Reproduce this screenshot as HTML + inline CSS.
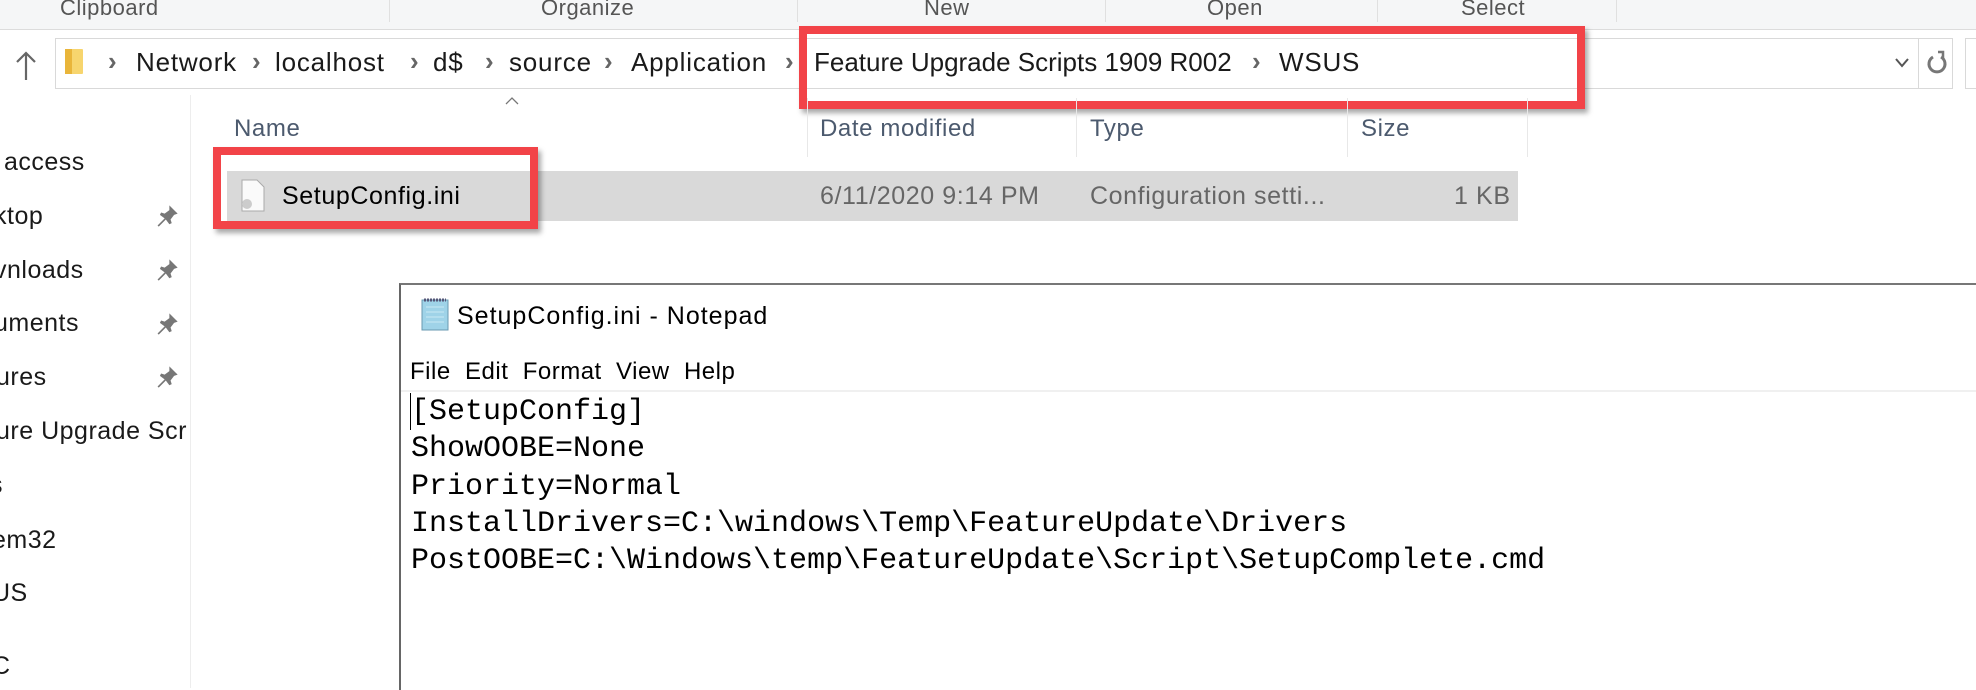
<!DOCTYPE html>
<html><head><meta charset="utf-8"><style>
body{margin:0;width:1976px;height:688px;overflow:hidden;background:#fff;position:relative;font-family:"Liberation Sans",sans-serif;}
.a{position:absolute;white-space:nowrap;}
.rb{color:#555;font-size:22px;top:-5px;letter-spacing:0.5px}
.sep{position:absolute;width:1px;background:#e0e0e0;}
.bc{font-size:26px;color:#1a1a1a;top:47px;letter-spacing:0.8px}
.ch{font-size:26px;color:#666;top:46px;font-weight:bold}
.nav{font-size:25px;color:#1a1a1a;left:-4px;letter-spacing:0.5px}
.pin{position:absolute;left:154px;width:26px;height:26px;}
.hd{font-size:24px;color:#4c5a6e;top:115px;letter-spacing:0.6px}
.cs{position:absolute;top:98px;height:59px;width:1px;background:#e8e8e8;}
.red{position:absolute;border:8px solid #f24348;box-shadow:3px 4px 5px rgba(0,0,0,.35);}
.code{font-family:"Liberation Mono",monospace;font-size:30px;color:#000;left:411px;}
.rt{font-size:25px;top:182px;letter-spacing:0.6px}
</style></head><body>
<div class="a" style="left:0;top:0;width:1976px;height:29px;background:#f5f6f7;border-bottom:1px solid #dcdcdc"></div>
<div class="a rb" style="left:60px">Clipboard</div>
<div class="a rb" style="left:541px">Organize</div>
<div class="a rb" style="left:924px">New</div>
<div class="a rb" style="left:1207px">Open</div>
<div class="a rb" style="left:1461px">Select</div>
<div class="sep" style="left:389px;top:0;height:22px"></div>
<div class="sep" style="left:797px;top:0;height:22px"></div>
<div class="sep" style="left:1105px;top:0;height:22px"></div>
<div class="sep" style="left:1377px;top:0;height:22px"></div>
<div class="sep" style="left:1616px;top:0;height:22px"></div>
<svg class="a" style="left:14px;top:50px" width="24" height="32"><path d="M12 30V3M3 12l9-9 9 9" stroke="#666" stroke-width="2.2" fill="none"/></svg>
<div class="a" style="left:55px;top:38px;width:1896px;height:49px;border:1px solid #d9d9d9;background:#fff"></div>
<div class="a" style="left:1965px;top:38px;width:20px;height:49px;border:1px solid #d9d9d9"></div>
<div class="a" style="left:65px;top:49px;width:18px;height:25px;background:#f7d56e;border-radius:1px"></div>
<div class="a" style="left:65px;top:49px;width:7px;height:25px;background:#e9b53a"></div>
<div class="a ch" style="left:108px">›</div>
<div class="a bc" style="left:136px">Network</div>
<div class="a ch" style="left:252px">›</div>
<div class="a bc" style="left:275px">localhost</div>
<div class="a ch" style="left:410px">›</div>
<div class="a bc" style="left:433px">d$</div>
<div class="a ch" style="left:485px">›</div>
<div class="a bc" style="left:509px">source</div>
<div class="a ch" style="left:604px">›</div>
<div class="a bc" style="left:631px">Application</div>
<div class="a ch" style="left:785px">›</div>
<div class="a bc" style="left:814px;letter-spacing:0">Feature Upgrade Scripts 1909 R002</div>
<div class="a ch" style="left:1252px">›</div>
<div class="a bc" style="left:1279px">WSUS</div>
<svg class="a" style="left:1894px;top:57px" width="16" height="12"><path d="M2 2l6 7 6-7" stroke="#555" stroke-width="2" fill="none"/></svg>
<div class="a" style="left:1918px;top:38px;width:1px;height:50px;background:#d9d9d9"></div>
<svg class="a" style="left:1926px;top:50px" width="22" height="26"><path d="M15 7A8 8 0 1 1 7 7" stroke="#777" stroke-width="3" fill="none"/><path d="M12 2h5v6" stroke="#777" stroke-width="2.5" fill="none"/></svg>
<div class="red" style="left:799px;top:26px;width:770px;height:67px"></div>
<div class="a" style="left:190px;top:95px;width:1px;height:593px;background:#ededed"></div>
<div class="a" style="left:0;top:140px;width:188px;height:548px;overflow:hidden">
<div class="a nav" style="top:8px;left:4px">access</div>
<div class="a nav" style="top:62px;left:-6px">ktop</div>
<div class="a nav" style="top:116px;left:-6px">vnloads</div>
<div class="a nav" style="top:169px;left:-6px">uments</div>
<div class="a nav" style="top:223px;left:-4px">ures</div>
<div class="a nav" style="top:277px;left:-4px">ure Upgrade Scr</div>
<div class="a nav" style="top:331px;left:-10px">s</div>
<div class="a nav" style="top:386px;left:-8px">em32</div>
<div class="a nav" style="top:439px;left:-8px">US</div>
<div class="a nav" style="top:512px;left:-8px">C</div>
</div>
<svg class="pin" style="top:203px" viewBox="0 0 22 22"><path d="M13 2l7 7-3 1-3 4 1 3-2 1-3-4-6 6-1-1 6-6-4-3 1-2 3 1 4-3z" fill="#777"/></svg>
<svg class="pin" style="top:257px" viewBox="0 0 22 22"><path d="M13 2l7 7-3 1-3 4 1 3-2 1-3-4-6 6-1-1 6-6-4-3 1-2 3 1 4-3z" fill="#777"/></svg>
<svg class="pin" style="top:311px" viewBox="0 0 22 22"><path d="M13 2l7 7-3 1-3 4 1 3-2 1-3-4-6 6-1-1 6-6-4-3 1-2 3 1 4-3z" fill="#777"/></svg>
<svg class="pin" style="top:364px" viewBox="0 0 22 22"><path d="M13 2l7 7-3 1-3 4 1 3-2 1-3-4-6 6-1-1 6-6-4-3 1-2 3 1 4-3z" fill="#777"/></svg>
<svg class="a" style="left:505px;top:96px" width="14" height="10"><path d="M1 8l6-6 6 6" stroke="#777" stroke-width="1.3" fill="none"/></svg>
<div class="a hd" style="left:234px">Name</div>
<div class="a hd" style="left:820px">Date modified</div>
<div class="a hd" style="left:1090px">Type</div>
<div class="a hd" style="left:1361px">Size</div>
<div class="cs" style="left:807px"></div><div class="cs" style="left:1076px"></div><div class="cs" style="left:1347px"></div><div class="cs" style="left:1527px"></div>
<div class="a" style="left:227px;top:171px;width:1291px;height:50px;background:#d9d9d9"></div>
<svg class="a" style="left:238px;top:178px" width="30" height="36"><path d="M4 2h15l7 7v24H4z" fill="#fafafa" stroke="#aaa"/><circle cx="9" cy="26" r="5" fill="#ccc"/></svg>
<div class="a rt" style="left:282px;color:#000">SetupConfig.ini</div>
<div class="a rt" style="left:820px;color:#666">6/11/2020 9:14 PM</div>
<div class="a rt" style="left:1090px;color:#666">Configuration setti...</div>
<div class="a rt" style="left:1454px;color:#666">1 KB</div>
<div class="red" style="left:213px;top:147px;width:309px;height:66px"></div>
<div class="a" style="left:399px;top:283px;width:1577px;height:405px;border-left:2px solid #666;border-top:2px solid #777;background:#fff"></div>
<svg class="a" style="left:418px;top:297px" width="34" height="34"><rect x="4" y="3" width="26" height="30" fill="#9fd3e8" stroke="#6a98b0"/><path d="M8 10h18M8 15h18M8 20h18M8 25h18" stroke="#c8e8f4"/><path d="M6 3h22" stroke="#557" stroke-width="3" stroke-dasharray="2 1"/></svg>
<div class="a" style="left:457px;top:302px;font-size:25px;color:#000;letter-spacing:1px">SetupConfig.ini - Notepad</div>
<div class="a" style="left:410px;top:358px;font-size:24px;color:#000;letter-spacing:0.5px">File&nbsp; Edit&nbsp; Format&nbsp; View&nbsp; Help</div>
<div class="a" style="left:401px;top:390px;width:1575px;height:2px;background:#f0f0f0"></div>
<div class="a" style="left:410px;top:393px;width:1px;height:37px;background:#000"></div>
<div class="a code" style="top:395px">[SetupConfig]</div>
<div class="a code" style="top:432px">ShowOOBE=None</div>
<div class="a code" style="top:470px">Priority=Normal</div>
<div class="a code" style="top:507px">InstallDrivers=C:\windows\Temp\FeatureUpdate\Drivers</div>
<div class="a code" style="top:544px">PostOOBE=C:\Windows\temp\FeatureUpdate\Script\SetupComplete.cmd</div>
</body></html>
